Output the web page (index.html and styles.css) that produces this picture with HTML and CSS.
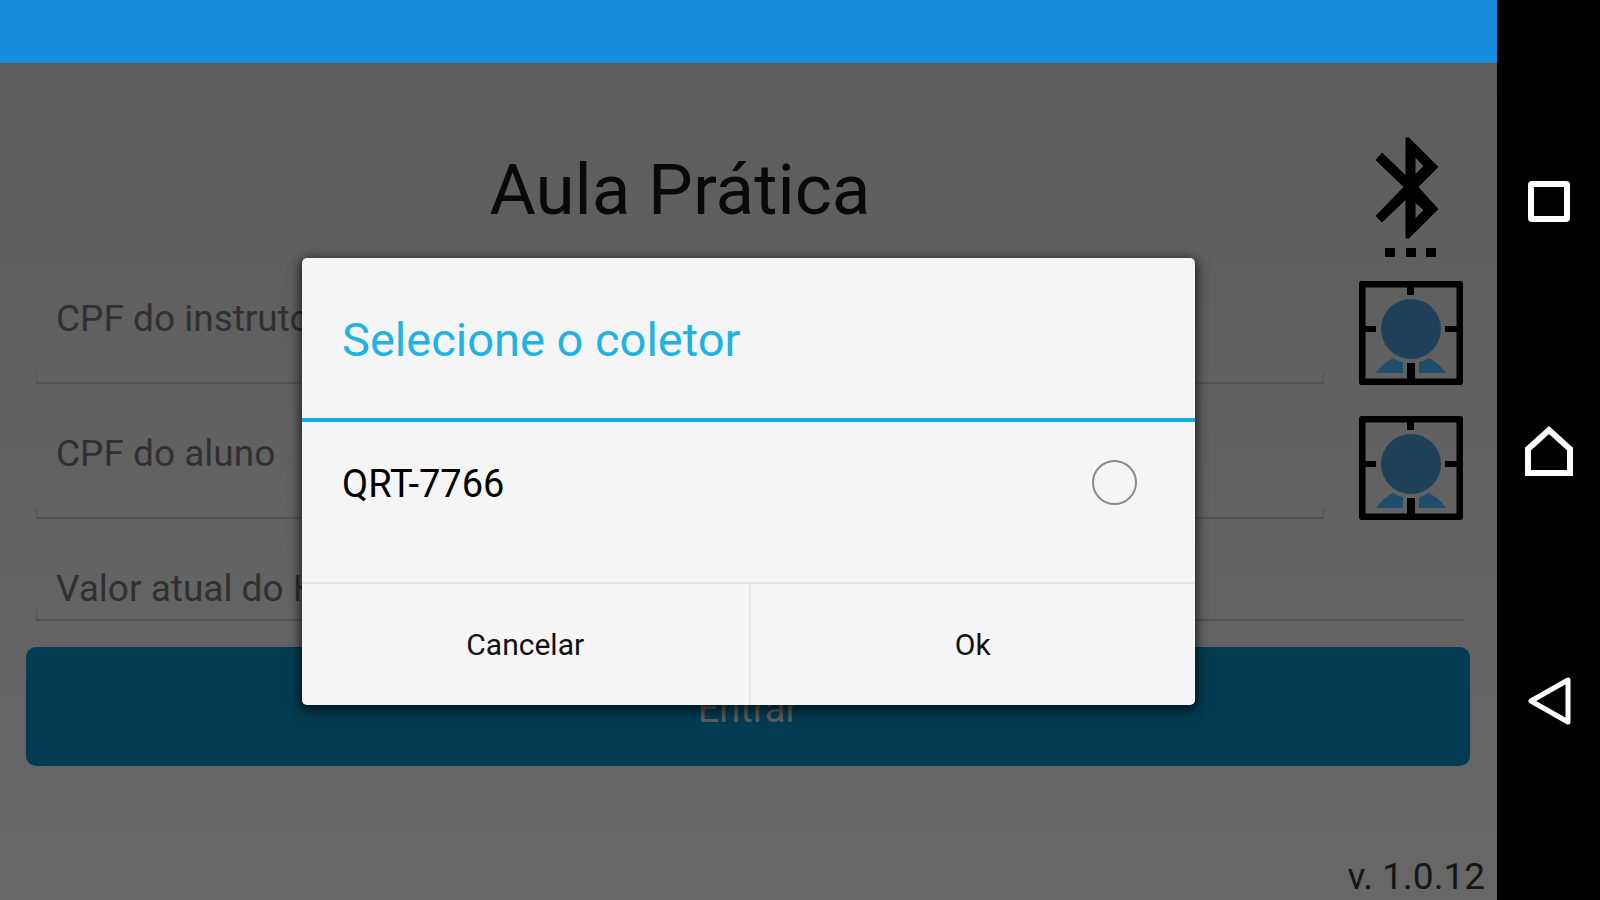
FILE: index.html
```html
<!DOCTYPE html>
<html lang="pt-BR">
<head>
<meta charset="utf-8">
<meta name="viewport" content="width=device-width, initial-scale=1">
<title>Aula Prática</title>
<link rel="stylesheet" href="styles.css">
</head>
<body>
<div class="device">
  <div class="status-bar"></div>
  <main class="screen">
    <form class="login">
      <header class="login-header">
        <h1 class="login-title">Aula Prática</h1>
        <button class="icon-button" type="button" aria-label="Bluetooth">
          <svg width="104" height="126" viewBox="0 0 104 126" aria-hidden="true">
            <path fill="#000" stroke="#000" stroke-width="1" stroke-linejoin="round" fill-rule="evenodd" d="M47 1H50L79 30L59 50L79 72L50 101H47V62L23 85L17 79L45 50L17 23L23 16L47 39ZM56 20V38L65 29ZM56 65V82L65 73Z"/>
            <path fill="#000" d="M26 111h10v9h-10zM47 111h10v9h-10zM67 111h10v9h-10z"/>
          </svg>
        </button>
      </header>
      <div class="fields">
        <div class="field-row">
          <div class="field"><input class="field-input" type="text" aria-label="CPF do instrutor" placeholder="CPF do instrutor"></div>
          <button class="icon-button" type="button" aria-label="Identificar instrutor">
            <svg width="104" height="104" viewBox="0 0 104 104" aria-hidden="true">
              <rect x="3" y="3" width="98" height="98" rx="1" fill="none" stroke="#000" stroke-width="7"/>
              <path fill="#000" d="M48 4h7v10h-7zM4 45h13v6H4zM86 45h14v6H86zM48 82h8v18h-8z"/>
              <circle cx="52" cy="48" r="30" fill="#1e4059"/>
              <path fill="#1e4e6c" d="M17 92Q23 83 34 77Q39 80 44 81V92ZM87 92Q81 83 70 77Q65 80 60 81V92Z"/>
            </svg>
          </button>
        </div>
        <div class="field-row">
          <div class="field"><input class="field-input" type="text" aria-label="CPF do aluno" placeholder="CPF do aluno"></div>
          <button class="icon-button" type="button" aria-label="Identificar aluno">
            <svg width="104" height="104" viewBox="0 0 104 104" aria-hidden="true">
              <rect x="3" y="3" width="98" height="98" rx="1" fill="none" stroke="#000" stroke-width="7"/>
              <path fill="#000" d="M48 4h7v10h-7zM4 45h13v6H4zM86 45h14v6H86zM48 82h8v18h-8z"/>
              <circle cx="52" cy="48" r="30" fill="#1e4059"/>
              <path fill="#1e4e6c" d="M17 92Q23 83 34 77Q39 80 44 81V92ZM87 92Q81 83 70 77Q65 80 60 81V92Z"/>
            </svg>
          </button>
        </div>
        <div class="field field-short"><input class="field-input" type="text" aria-label="Valor atual do Hodômetro" placeholder="Valor atual do Hodômetro"></div>
      </div>
      <button class="submit" type="submit">Entrar</button>
    </form>
    <p class="version">v. 1.0.12</p>
    <div class="overlay">
      <section class="dialog" role="dialog" aria-modal="true" aria-labelledby="dialog-title">
        <h2 class="dialog-title" id="dialog-title">Selecione o coletor</h2>
        <div class="dialog-list">
          <label class="option">QRT-7766<input class="option-radio" type="radio" name="coletor"></label>
        </div>
        <div class="dialog-actions">
          <button class="dialog-button" type="button">Cancelar</button>
          <button class="dialog-button" type="button">Ok</button>
        </div>
      </section>
    </div>
  </main>
  <nav class="system-nav" aria-label="Sistema">
    <button class="icon-button" type="button" aria-label="Recentes">
      <svg width="48" height="48" viewBox="0 0 48 48" aria-hidden="true"><rect x="6" y="6" width="36" height="35" rx="1" fill="none" stroke="#fff" stroke-width="6"/></svg>
    </button>
    <button class="icon-button" type="button" aria-label="Início">
      <svg width="52" height="52" viewBox="0 0 52 52" aria-hidden="true"><path d="M5 24L26 5L47 24V48H5Z" fill="none" stroke="#fff" stroke-width="6"/></svg>
    </button>
    <button class="icon-button" type="button" aria-label="Voltar">
      <svg width="52" height="52" viewBox="0 0 52 52" aria-hidden="true"><path d="M8 26L45 5V47Z" fill="none" stroke="#fff" stroke-width="5" stroke-linejoin="round"/></svg>
    </button>
  </nav>
</div>
</body>
</html>
```

FILE: styles.css
```css
* {
  box-sizing: border-box;
}

body {
  margin: 0;
  background: #000;
  color: #000;
  font-family: Roboto, "Noto Sans", sans-serif;
}

button,
input {
  font-family: inherit;
}

.device {
  display: grid;
  grid-template-columns: 1fr 103px;
  grid-template-rows: 63px 1fr;
  min-height: 100vh;
}

.status-bar {
  background: #158ddb;
}

.screen {
  position: relative;
  grid-row: 2;
  display: flex;
  flex-direction: column;
  justify-content: space-between;
  background: linear-gradient(#5d5d5d, #676767);
}

.login {
  padding: 0 27px 0 26px;
}

.login-header {
  display: flex;
  gap: 35px;
  padding: 74px 7px 18px 10px;
}

.login-title {
  flex: 1;
  margin: 0;
  color: #090909;
  font-size: 71px;
  font-weight: 400;
  line-height: 106px;
  text-align: center;
}

.icon-button {
  padding: 0;
  border: 0;
  background: none;
}

.icon-button svg {
  display: block;
}

.fields {
  display: grid;
  gap: 31px;
  padding: 0 7px 0 10px;
}

.field-row {
  display: flex;
  gap: 35px;
}

/* Thin underline with a short tick at each end */
.field {
  flex: 1;
  height: 103px;
  background:
    linear-gradient(#545454, #545454) left bottom / 1px 12px no-repeat,
    linear-gradient(#545454, #545454) right bottom / 1px 12px no-repeat,
    linear-gradient(#545454, #545454) left bottom / 100% 2px no-repeat;
}

.field-short {
  height: 70px;
  background:
    linear-gradient(#545454, #545454) left bottom / 1px 12px no-repeat,
    linear-gradient(#545454, #545454) left bottom / 100% 2px no-repeat;
}

.field-input {
  width: 100%;
  height: 74px;
  padding: 0 20px;
  border: 0;
  outline: 0;
  background: none;
  color: #111;
  font-size: 37px;
}

.field-input::placeholder {
  color: #303030;
  opacity: 1;
}

.submit {
  width: 100%;
  height: 119px;
  margin-top: 26px;
  padding: 4px 0 0;
  border: 0;
  border-radius: 10px;
  background: #033c52;
  color: #5c5c5c;
  font-size: 38px;
}

.version {
  margin: 0;
  padding: 0 12px 0 0;
  color: #151515;
  font-size: 37px;
  line-height: 46px;
  text-align: right;
}

.overlay {
  position: absolute;
  inset: 0;
  display: grid;
  place-items: center;
}

.dialog {
  width: 893px;
  max-width: 90%;
  overflow: hidden;
  border-radius: 5px;
  background: #f5f5f5;
  box-shadow: 0 3px 12px 2px rgba(0, 0, 0, 0.7);
}

.dialog-title {
  margin: 0;
  padding: 50px 40px 46px;
  border-bottom: 4px solid #19b0e0;
  color: #20b2e2;
  font-size: 47px;
  font-weight: 400;
  line-height: 64px;
}

.dialog-list {
  padding: 12px 58px 48px 40px;
}

.option {
  display: flex;
  align-items: center;
  justify-content: space-between;
  min-height: 100px;
  font-size: 38px;
}

.option-radio {
  width: 45px;
  height: 45px;
  margin: 0 0 4px;
  border: 2px solid #8a8a8a;
  border-radius: 50%;
  appearance: none;
}

.option-radio:checked {
  background: radial-gradient(#19b0e0 45%, transparent 50%);
}

.dialog-actions {
  display: grid;
  grid-template-columns: 1fr 1fr;
  border-top: 2px solid #e2e2e2;
}

.dialog-button {
  height: 121px;
  padding: 0;
  border: 0;
  background: none;
  color: #111;
  font-size: 30px;
}

.dialog-button + .dialog-button {
  border-left: 2px solid #e6e6e6;
}

.system-nav {
  grid-column: 2;
  grid-row: 1 / 3;
  display: grid;
  grid-template-rows: repeat(3, 1fr);
  place-items: center;
  padding: 77px 0 74px;
  background: #000;
}
```
